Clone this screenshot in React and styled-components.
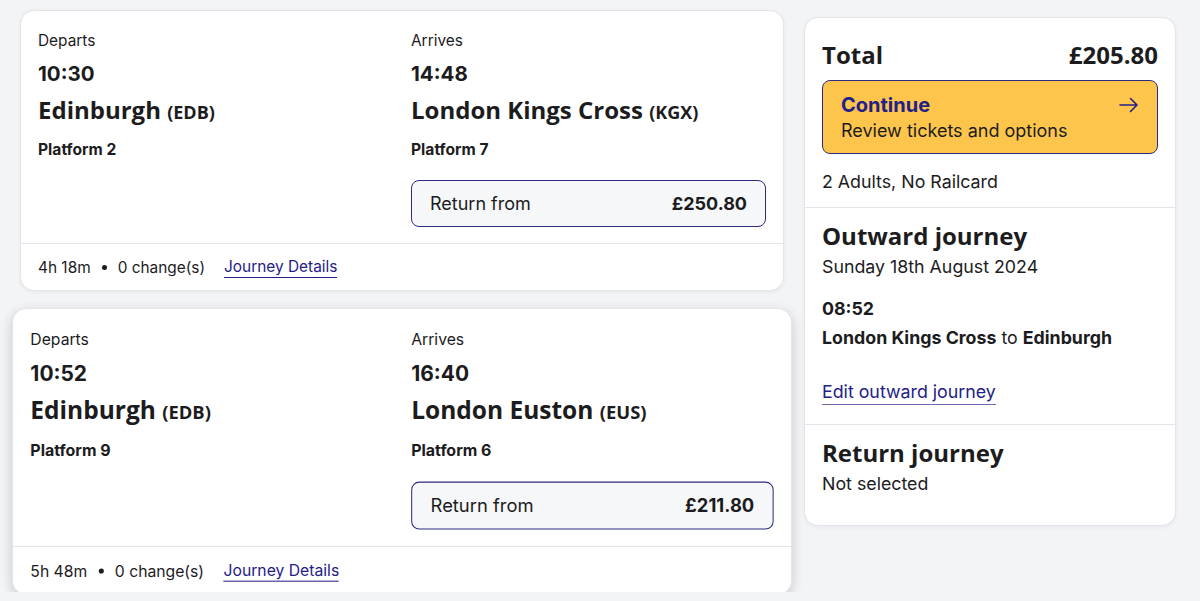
import React from "react";
import styled, { createGlobalStyle } from "styled-components";

const GlobalStyle = createGlobalStyle`
  body {
    margin: 0;
    background: #f3f4f6;
    font-family: Inter, "Liberation Sans", sans-serif;
    color: #1c1c1e;
  }
`;

const journeys = [
  {
    departTime: "10:30",
    departStation: "Edinburgh",
    departCode: "EDB",
    departPlatform: "Platform 2",
    arriveTime: "14:48",
    arriveStation: "London Kings Cross",
    arriveCode: "KGX",
    arrivePlatform: "Platform 7",
    price: "£250.80",
    duration: "4h 18m",
    changes: "0 change(s)",
  },
  {
    departTime: "10:52",
    departStation: "Edinburgh",
    departCode: "EDB",
    departPlatform: "Platform 9",
    arriveTime: "16:40",
    arriveStation: "London Euston",
    arriveCode: "EUS",
    arrivePlatform: "Platform 6",
    price: "£211.80",
    duration: "5h 48m",
    changes: "0 change(s)",
    hovered: true,
  },
];

const Arrow = () => (
  <svg width="20" height="16" viewBox="0 0 20 16" fill="none">
    <path
      d="M1 8h17M11.5 1.5L18 8l-6.5 6.5"
      stroke="#23208a"
      strokeWidth="1.6"
      strokeLinecap="round"
      strokeLinejoin="round"
    />
  </svg>
);

export default function App() {
  return (
    <Page>
      <GlobalStyle />
      <Results>
        {journeys.map((j) => (
          <JourneyCard key={j.departTime} $hovered={j.hovered}>
            <CardBody>
              <Column>
                <Label>Departs</Label>
                <Time>{j.departTime}</Time>
                <Station>
                  {j.departStation} <Code>({j.departCode})</Code>
                </Station>
                <Platform>{j.departPlatform}</Platform>
              </Column>
              <Column>
                <Label>Arrives</Label>
                <Time>{j.arriveTime}</Time>
                <Station>
                  {j.arriveStation} <Code>({j.arriveCode})</Code>
                </Station>
                <Platform>{j.arrivePlatform}</Platform>
                <PriceButton>
                  <span>Return from</span>
                  <Price>{j.price}</Price>
                </PriceButton>
              </Column>
            </CardBody>
            <CardFooter>
              <span>{j.duration}</span>
              <Dot />
              <span>{j.changes}</span>
              <Link>Journey Details</Link>
            </CardFooter>
          </JourneyCard>
        ))}
      </Results>

      <Summary>
        <SummarySection $top>
          <TotalRow>
            <span>Total</span>
            <span>£205.80</span>
          </TotalRow>
          <ContinueButton>
            <ContinueText>
              <strong>Continue</strong>
              <span>Review tickets and options</span>
            </ContinueText>
            <Arrow />
          </ContinueButton>
          <BodyText $mt={15}>2 Adults, No Railcard</BodyText>
        </SummarySection>
        <SummarySection>
          <Heading>Outward journey</Heading>
          <BodyText>Sunday 18th August 2024</BodyText>
          <BodyText $mt={16} $bold>08:52</BodyText>
          <BodyText $mt={3}>
            <b>London Kings Cross</b> to <b>Edinburgh</b>
          </BodyText>
          <EditLink>Edit outward journey</EditLink>
        </SummarySection>
        <SummarySection $last>
          <Heading>Return journey</Heading>
          <BodyText>Not selected</BodyText>
        </SummarySection>
      </Summary>
    </Page>
  );
}

const Page = styled.div`
  display: flex;
  align-items: flex-start;
  gap: 20px;
  padding: 10px 24px 0 20px;
`;

const Results = styled.div`
  width: 764px;
  display: flex;
  flex-direction: column;
  gap: 20px;
`;

const JourneyCard = styled.div`
  background: #fff;
  border: 1px solid #e4e4ea;
  border-radius: 14px;
  box-shadow: ${(p) =>
    p.$hovered
      ? "0 3px 10px rgba(20, 20, 40, 0.16)"
      : "0 1px 4px rgba(20, 20, 40, 0.06)"};
  transform: ${(p) => (p.$hovered ? "scale(1.021)" : "none")};
  overflow: hidden;
`;

const CardBody = styled.div`
  display: grid;
  grid-template-columns: 1fr 1fr;
  column-gap: 18px;
  padding: 19px 17px 16px 17px;
  border-bottom: 1px solid #e3e3ea;
`;

const Column = styled.div`
  display: flex;
  flex-direction: column;
`;

const Label = styled.div`
  font-size: 15.4px;
  line-height: 22px;
`;

const Time = styled.div`
  font-size: 20.5px;
  font-weight: 700;
  line-height: 28px;
  margin-top: 8px;
`;

const Station = styled.div`
  font-family: "Open Sans", "Liberation Sans", sans-serif;
  font-size: 24px;
  font-weight: 700;
  line-height: 34px;
  margin-top: 5px;
`;

const Code = styled.span`
  font-size: 18px;
`;

const Platform = styled.div`
  font-size: 15.6px;
  font-weight: 700;
  line-height: 22px;
  margin-top: 10px;
`;

const PriceButton = styled.div`
  margin-top: 19px;
  height: 47px;
  box-sizing: border-box;
  display: flex;
  align-items: center;
  justify-content: space-between;
  padding: 0 18px;
  background: #f6f7f9;
  border: 1.5px solid #2d2a80;
  border-radius: 8px;
  font-size: 18px;
`;

const Price = styled.span`
  font-weight: 700;
`;

const CardFooter = styled.div`
  height: 46px;
  display: flex;
  align-items: center;
  padding: 0 17px 0 17px;
  font-size: 15.4px;
`;

const Dot = styled.span`
  width: 5px;
  height: 5px;
  border-radius: 50%;
  background: #1c1c1e;
  margin: 0 11px;
`;

const Link = styled.span`
  color: #23208a;
  margin-left: 19px;
  padding-bottom: 1px;
  border-bottom: 1.5px solid #23208a;
`;

const Summary = styled.div`
  width: 372px;
  margin-top: 7px;
  background: #fff;
  border: 1px solid #e4e4ea;
  border-radius: 14px;
  box-shadow: 0 1px 4px rgba(20, 20, 40, 0.06);
  box-sizing: border-box;
`;

const SummarySection = styled.div`
  padding: ${(p) =>
    p.$top ? "19px 17px 12px" : p.$last ? "10px 17px 28px" : "10px 17px 19px"};
  border-bottom: ${(p) => (p.$last ? "none" : "1px solid #e3e3ea")};
`;

const TotalRow = styled.div`
  display: flex;
  justify-content: space-between;
  font-family: "Open Sans", "Liberation Sans", sans-serif;
  font-size: 24px;
  font-weight: 700;
  line-height: 36px;
`;

const ContinueButton = styled.div`
  margin-top: 7px;
  display: flex;
  align-items: flex-start;
  justify-content: space-between;
  padding: 11px 18px 9px 18px;
  background: #fdc54b;
  border: 1px solid #2d2a80;
  border-radius: 8px;
  svg {
    margin-top: 5px;
  }
`;

const ContinueText = styled.div`
  display: flex;
  flex-direction: column;
  strong {
    color: #23208a;
    font-size: 20px;
    line-height: 26px;
  }
  span {
    font-size: 18px;
    line-height: 26px;
  }
`;

const Heading = styled.div`
  font-family: "Open Sans", "Liberation Sans", sans-serif;
  font-size: 24px;
  font-weight: 700;
  line-height: 36px;
`;

const BodyText = styled.div`
  font-size: 17.8px;
  line-height: 26px;
  margin-top: ${(p) => p.$mt || 0}px;
  font-weight: ${(p) => (p.$bold ? 700 : 400)};
  b {
    font-weight: 700;
  }
`;

const EditLink = styled.span`
  display: inline-block;
  margin-top: 29px;
  font-size: 17.8px;
  line-height: 24px;
  color: #23208a;
  border-bottom: 1.5px solid #6d6ab0;
`;
